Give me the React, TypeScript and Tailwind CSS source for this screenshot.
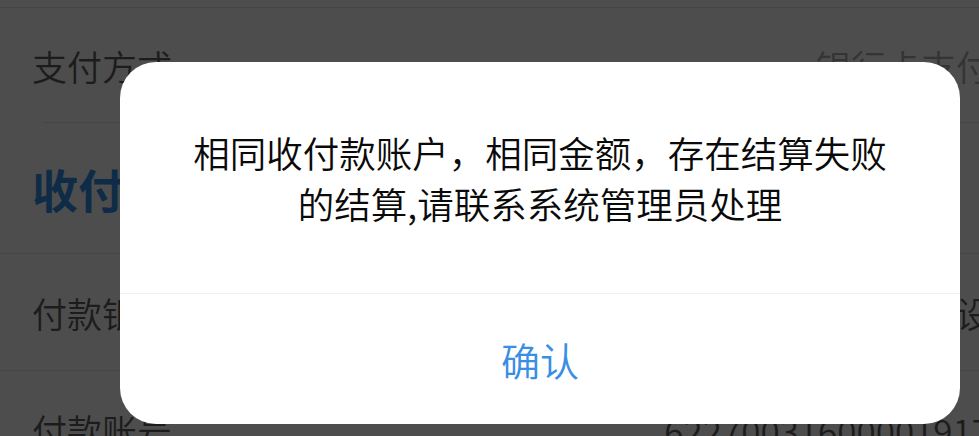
import React from "react";

const font = { fontFamily: '"Noto Sans CJK SC", "Noto Sans", sans-serif' };

export default function App() {
  return (
    <div
      className="relative w-[979px] h-[436px] overflow-hidden bg-[#4d4d4d] font-[350]"
      style={font}
    >
      <div className="w-[1023px] flex flex-col">
        <div className="h-[7px]" />
        <div className="h-px bg-[#454545]" />
        <div className="h-[114px] flex items-center justify-between px-[32px] text-[35px] leading-none">
          <span className="text-[#1c1c1c]">支付方式</span>
          <span className="text-[#343434]">银行卡支付</span>
        </div>
        <div className="h-px ml-[42px] bg-[#454545]" />
        <div className="h-[130px] flex items-center px-[32px]">
          <span className="text-[46px] font-bold leading-none text-[#0e2b47]">收付款信息</span>
        </div>
        <div className="h-px bg-[#454545]" />
        <div className="h-[116px] flex items-center justify-between px-[32px] text-[35px] leading-none">
          <span className="text-[#1c1c1c]">付款银行</span>
          <span className="text-[#1c1c1c]">中国建设</span>
        </div>
        <div className="h-px bg-[#454545]" />
        <div className="h-[116px] flex items-center justify-between px-[32px] text-[35px] leading-none">
          <span className="text-[#1c1c1c]">付款账号</span>
          <span className="text-[#1c1c1c]">62270031600001917</span>
        </div>
      </div>

      <div className="absolute left-[120px] top-[62px] w-[840px] h-[362px] rounded-[36px] bg-white flex flex-col overflow-hidden">
        <div className="h-[231px] flex items-center justify-center text-center">
          <p className="text-[36.5px] leading-[51px] text-[#0a0a0a]">
            相同收付款账户，相同金额，存在结算失败
            <br />
            的结算,请联系系统管理员处理
          </p>
        </div>
        <div className="h-px bg-[#f0f0f0]" />
        <div className="flex-1 flex items-center justify-center">
          <span className="text-[39px] leading-none text-[#3a8ee4]">确认</span>
        </div>
      </div>
    </div>
  );
}
